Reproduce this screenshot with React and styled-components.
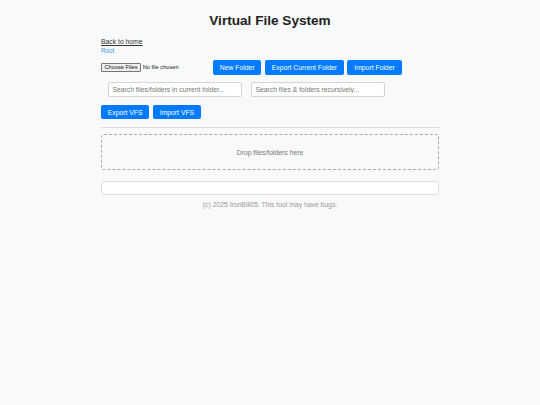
import styled, { createGlobalStyle } from "styled-components";

const GlobalStyle = createGlobalStyle`
    body {
        margin: 0;
        background: #f8f9fa;
        font-family: "Liberation Sans", Arial, sans-serif;
        color: #222;
    }
`;

const Page = styled.div`
    width: 338px;
    margin: 0 auto;
    padding-top: 13.2px;
`;

const Title = styled.h1`
    margin: 0 0 9.7px;
    text-align: center;
    font-size: 13.6px;
    line-height: 15.6px;
    font-weight: bold;
    color: #222;
`;

const BackLink = styled.a`
    display: block;
    width: fit-content;
    font-size: 6.8px;
    line-height: 7.6px;
    color: #333;
    text-decoration: underline;
`;

const Crumb = styled.div`
    margin-top: 0.5px;
    font-size: 6.3px;
    line-height: 7px;
    color: #3b8ff0;
`;

const Row = styled.div`
    display: flex;
    align-items: center;
    gap: ${(p) => p.$gap || 3.6}px;
    margin-top: ${(p) => p.$top}px;
    padding-left: ${(p) => p.$indent || 0}px;
`;

const FileInput = styled.input`
    flex: none;
    width: 108px;
    margin-right: 0.4px;
    font-family: "Liberation Sans", Arial, sans-serif;
    font-size: 5.67px;
    color: #222;

    &::file-selector-button {
        font-family: "Liberation Sans", Arial, sans-serif;
        font-size: 5.67px;
        line-height: 6.3px;
        padding: 0.4px 2.5px;
        margin-right: 1.7px;
        background: #efefef;
        border: 0.5px solid #767676;
        border-radius: 1px;
        color: #111;
    }
`;

const Button = styled.button`
    flex: none;
    background: #007bff;
    color: #fff;
    border: none;
    border-radius: 2px;
    padding: 3.4px 6.8px;
    font-family: "Liberation Sans", Arial, sans-serif;
    font-size: 6.8px;
    line-height: 7.6px;
    cursor: pointer;
`;

const Search = styled.input`
    box-sizing: border-box;
    width: 134px;
    height: 15px;
    padding: 0 3.4px;
    background: #fff;
    border: 0.5px solid #d4d4d4;
    border-radius: 2px;
    font-family: "Liberation Sans", Arial, sans-serif;
    font-size: 6.8px;
    color: #222;
    &::placeholder {
        color: #777;
    }
`;

const Rule = styled.hr`
    margin: 7.7px 0 0;
    border: none;
    border-top: 1px solid #dcdcdc;
`;

const DropZone = styled.div`
    box-sizing: border-box;
    height: 35.3px;
    margin-top: 6.3px;
    display: flex;
    align-items: center;
    justify-content: center;
    border: 1px dashed #aaa;
    border-radius: 3px;
    font-size: 6.8px;
    color: #777;
`;

const Listing = styled.div`
    box-sizing: border-box;
    height: 14px;
    margin-top: 11px;
    background: #fff;
    border: 0.5px solid #ddd;
    border-radius: 3px;
`;

const Footer = styled.footer`
    margin-top: 6.6px;
    text-align: center;
    font-size: 6.8px;
    line-height: 7.6px;
    color: #999;
`;

const App = () => {
    return (
        <>
            <GlobalStyle />
            <Page>
                <Title>Virtual File System</Title>
                <BackLink href="#">Back to home</BackLink>
                <Crumb>Root</Crumb>

                <Row $top={6.7}>
                    <FileInput type="file" multiple />
                    <Button>New Folder</Button>
                    <Button>Export Current Folder</Button>
                    <Button>Import Folder</Button>
                </Row>

                <Row $top={7.8} $gap={9} $indent={7}>
                    <Search placeholder="Search files/folders in current folder..." />
                    <Search placeholder="Search files & folders recursively..." />
                </Row>

                <Row $top={7.7}>
                    <Button>Export VFS</Button>
                    <Button>Import VFS</Button>
                </Row>

                <Rule />
                <DropZone>Drop files/folders here</DropZone>
                <Listing />
                <Footer>(c) 2025 IronBill05. This tool may have bugs.</Footer>
            </Page>
        </>
    );
};

export default App;
